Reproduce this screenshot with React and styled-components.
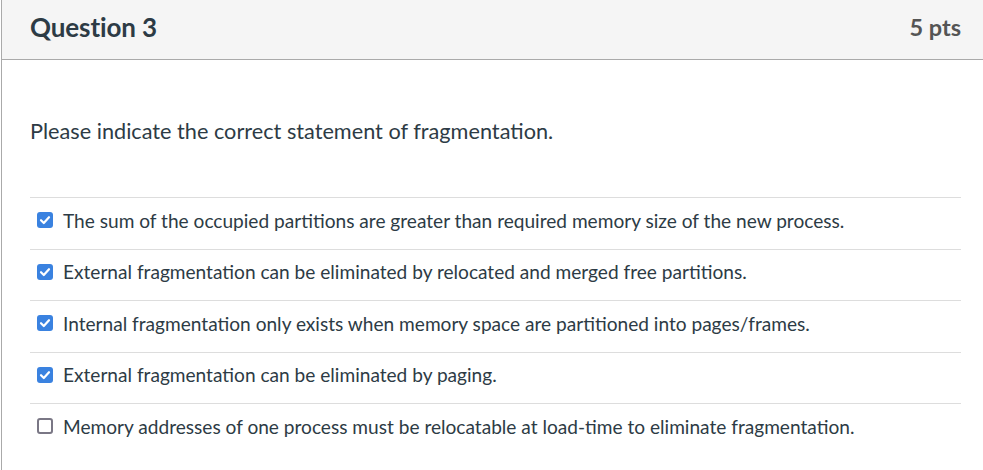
import React from "react";
import styled, { createGlobalStyle } from "styled-components";

const GlobalStyle = createGlobalStyle`
  html, body {
    margin: 0;
    padding: 0;
    background: #fff;
  }
  body {
    font-family: Lato, "Open Sans", sans-serif;
    color: #2d3b45;
  }
`;

const QuestionBox = styled.div`
  box-sizing: border-box;
  margin-left: 1px;
  width: 982px;
  min-height: 470px;
  border-left: 1px solid #aaa;
`;

const Header = styled.div`
  display: flex;
  align-items: center;
  justify-content: space-between;
  box-sizing: border-box;
  height: 60px;
  padding: 0 22px 6px 28px;
  background: #f5f5f5;
  border-bottom: 1px solid #aaa;
`;

const Title = styled.h2`
  margin: 0;
  font-size: 26px;
  font-weight: 700;
  letter-spacing: -0.1px;
  color: #2d3b45;
`;

const Points = styled.span`
  font-size: 23.5px;
  font-weight: 700;
  color: #555;
`;

const Body = styled.div`
  padding: 56px 22px 0 28px;
`;

const Prompt = styled.p`
  margin: 0 0 51px;
  font-size: 21.7px;
  line-height: 30px;
`;

const AnswerList = styled.div`
  display: flex;
  flex-direction: column;
`;

const Answer = styled.label`
  display: flex;
  align-items: center;
  gap: 10px;
  box-sizing: border-box;
  height: 51.5px;
  padding: 0 0 6px 7px;
  border-top: 1px solid #ddd;
  font-size: 19.1px;
`;

const Box = styled.span`
  display: flex;
  flex: none;
  align-items: center;
  justify-content: center;
  box-sizing: border-box;
  width: 16px;
  height: 16px;
  border-radius: 3px;
  background: ${(p) => (p.checked ? "#3a82e0" : "#fff")};
  border: ${(p) => (p.checked ? "none" : "2px solid #7a7785")};
`;

const Check = () => (
  <svg width="12" height="12" viewBox="0 0 12 12">
    <path d="M2 6.2 L4.8 9 L10 3.2" fill="none" stroke="#fff" strokeWidth="2.2" strokeLinecap="round" strokeLinejoin="round" />
  </svg>
);

const answers = [
  { text: "The sum of the occupied partitions are greater than required memory size of the new process.", checked: true },
  { text: "External fragmentation can be eliminated by relocated and merged free partitions.", checked: true },
  { text: "Internal fragmentation only exists when memory space are partitioned into pages/frames.", checked: true },
  { text: "External fragmentation can be eliminated by paging.", checked: true },
  { text: "Memory addresses of one process must be relocatable at load-time to eliminate fragmentation.", checked: false },
];

export default function App() {
  return (
    <>
      <GlobalStyle />
      <QuestionBox>
        <Header>
          <Title>Question 3</Title>
          <Points>5 pts</Points>
        </Header>
        <Body>
          <Prompt>Please indicate the correct statement of fragmentation.</Prompt>
          <AnswerList>
            {answers.map((a) => (
              <Answer key={a.text}>
                <Box checked={a.checked}>{a.checked && <Check />}</Box>
                {a.text}
              </Answer>
            ))}
          </AnswerList>
        </Body>
      </QuestionBox>
    </>
  );
}
